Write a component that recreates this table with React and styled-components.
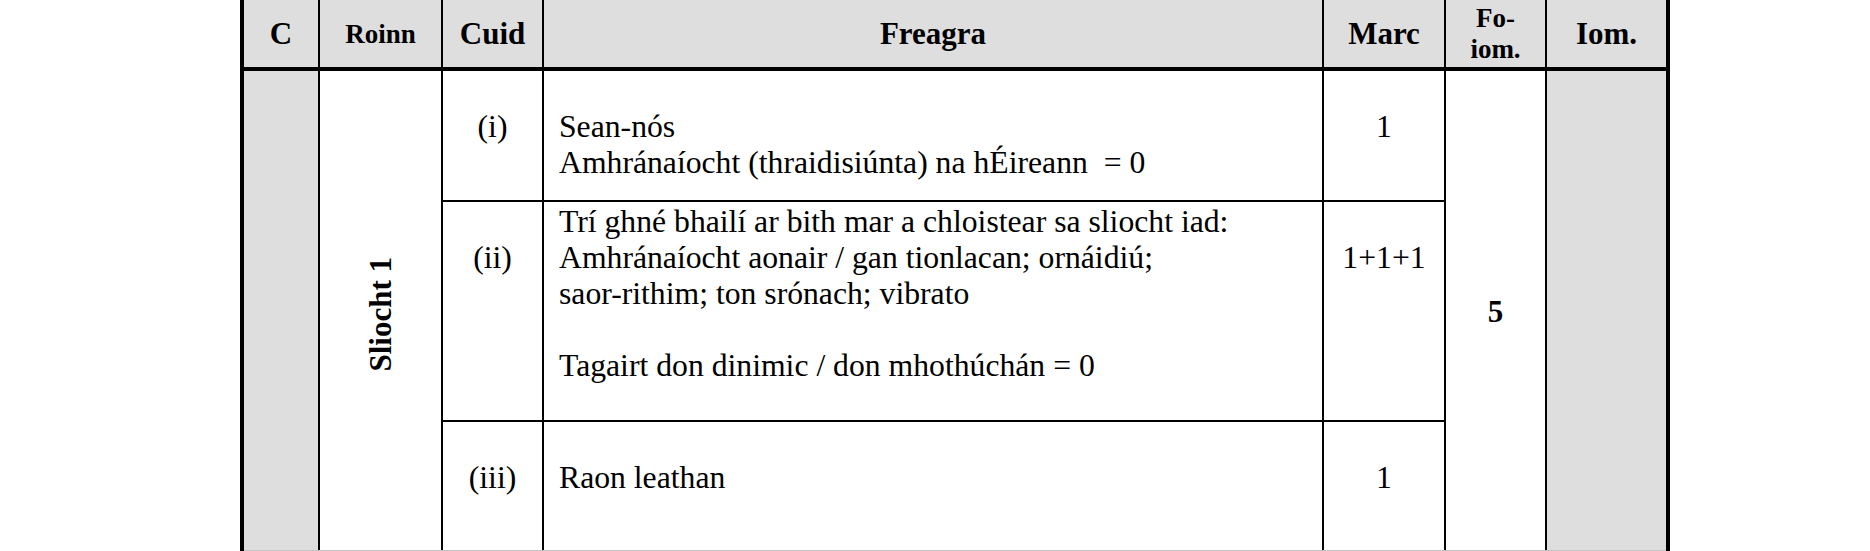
import React from 'react'
import styled, { createGlobalStyle, css } from 'styled-components'

const GlobalStyle = createGlobalStyle`
  html, body {
    margin: 0;
    padding: 0;
    background: #ffffff;
    overflow: hidden;
  }
`

const serif = css`
  font-family: "Liberation Serif", "Times New Roman", "DejaVu Serif", serif;
  color: #000;
`

const shade = '#dedede'
const columns = '74px 121px 99px 778px 120px 99px 119px'

const rows = [
  { cuid: '(i)', marc: '1', lines: ['', 'Sean-nós', 'Amhránaíocht (thraidisiúnta) na hÉireann\u00a0 = 0'] },
  {
    cuid: '(ii)',
    marc: '1+1+1',
    lines: [
      'Trí ghné bhailí ar bith mar a chloistear sa sliocht iad:',
      'Amhránaíocht aonair / gan tionlacan; ornáidiú;',
      'saor-rithim; ton srónach; vibrato',
      '',
      'Tagairt don dinimic / don mhothúchán = 0',
    ],
  },
  { cuid: '(iii)', marc: '1', lines: ['', 'Raon leathan'] },
]

function App() {
  return (
    <Page>
      <GlobalStyle />
      <Table>
        <HeaderRow>
          <HeadCell>C</HeadCell>
          <HeadCell small>Roinn</HeadCell>
          <HeadCell>Cuid</HeadCell>
          <HeadCell>Freagra</HeadCell>
          <HeadCell>Marc</HeadCell>
          <HeadCell small>
            <span>Fo-</span>
            <span>iom.</span>
          </HeadCell>
          <HeadCell>Iom.</HeadCell>
        </HeaderRow>
        <Body>
          <Shaded style={{ gridRow: '1 / 4', gridColumn: 1 }} />
          <Section style={{ gridRow: '1 / 4', gridColumn: 2 }}>
            <Rotated>Sliocht 1</Rotated>
          </Section>
          {rows.map((r, i) => (
            <React.Fragment key={r.cuid}>
              <Centred style={{ gridRow: i + 1, gridColumn: 3 }}>{r.cuid}</Centred>
              <Answer style={{ gridRow: i + 1, gridColumn: 4 }}>
                {r.lines.map((l, j) => (
                  <Line key={j}>{l}</Line>
                ))}
              </Answer>
              <Centred style={{ gridRow: i + 1, gridColumn: 5 }}>{r.marc}</Centred>
            </React.Fragment>
          ))}
          <Total style={{ gridRow: '1 / 4', gridColumn: 6 }}>5</Total>
          <Shaded style={{ gridRow: '1 / 4', gridColumn: 7 }} />
        </Body>
      </Table>
    </Page>
  )
}

export default App

const Page = styled.div`
  width: 1870px;
  height: 551px;
  padding-left: 240px;
  box-sizing: border-box;
`

const Table = styled.div`
  width: 1430px;
  border-left: 4px solid #000;
  border-right: 4px solid #000;
  box-sizing: border-box;
`

const HeaderRow = styled.div`
  display: grid;
  grid-template-columns: ${columns};
  column-gap: 2px;
  background: #000;
  height: 67px;
  border-bottom: 4px solid #000;
`

const HeadCell = styled.div`
  ${serif};
  background: ${shade};
  display: flex;
  flex-direction: column;
  align-items: center;
  justify-content: center;
  font-weight: bold;
  font-size: ${p => (p.small ? '27px' : '31px')};
  line-height: ${p => (p.small ? '31px' : '36px')};
  padding-top: 1px;
`

const Body = styled.div`
  display: grid;
  grid-template-columns: ${columns};
  grid-template-rows: 129px 218px 128px;
  gap: 2px;
  background: #000;
  border-bottom: 1px solid #c4c4c4;
`

const Shaded = styled.div`
  background: ${shade};
`

const Section = styled.div`
  background: #fff;
  display: flex;
  align-items: center;
  justify-content: center;
`

const Rotated = styled.div`
  ${serif};
  writing-mode: vertical-rl;
  transform: rotate(180deg);
  font-weight: bold;
  font-size: 31px;
  line-height: 36px;
  margin-top: 8px;
`

const Centred = styled.div`
  ${serif};
  background: #fff;
  text-align: center;
  font-size: 31.7px;
  line-height: 36px;
  padding-top: 38px;
`

const Answer = styled.div`
  ${serif};
  background: #fff;
  font-size: 31.7px;
  line-height: 36px;
  padding: 2px 0 0 15px;
`

const Line = styled.div`
  min-height: 36px;
  white-space: pre;
`

const Total = styled.div`
  ${serif};
  background: #fff;
  display: flex;
  align-items: center;
  justify-content: center;
  font-weight: bold;
  font-size: 31px;
  padding-top: 2px;
`
